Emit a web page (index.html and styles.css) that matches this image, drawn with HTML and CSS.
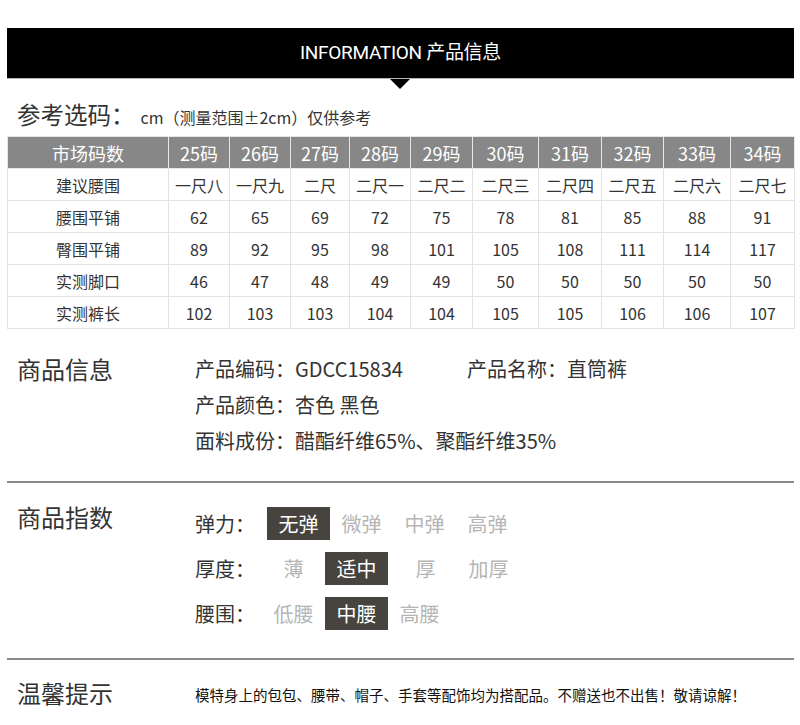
FILE: index.html
```html
<!DOCTYPE html>
<html lang="zh-CN">
<head>
<meta charset="utf-8">
<title>INFORMATION 产品信息</title>
<link rel="stylesheet" href="styles.css">
</head>
<body>
<div class="page">
  <div class="banner"><span class="banner-text">INFORMATION 产品信息</span></div>

  <h2 class="size-title">参考选码：<span class="size-note">cm（测量范围±2cm）仅供参考</span></h2>

  <table class="size-table">
    <colgroup>
      <col style="width:161px"><col style="width:61px"><col style="width:61px"><col style="width:59px"><col style="width:61px"><col style="width:62px"><col style="width:66px"><col style="width:63px"><col style="width:62px"><col style="width:67px"><col style="width:64px">
    </colgroup>
    <thead>
      <tr><th>市场码数</th><th>25码</th><th>26码</th><th>27码</th><th>28码</th><th>29码</th><th>30码</th><th>31码</th><th>32码</th><th>33码</th><th>34码</th></tr>
    </thead>
    <tbody>
      <tr><td>建议腰围</td><td>一尺八</td><td>一尺九</td><td>二尺</td><td>二尺一</td><td>二尺二</td><td>二尺三</td><td>二尺四</td><td>二尺五</td><td>二尺六</td><td>二尺七</td></tr>
      <tr><td>腰围平铺</td><td>62</td><td>65</td><td>69</td><td>72</td><td>75</td><td>78</td><td>81</td><td>85</td><td>88</td><td>91</td></tr>
      <tr><td>臀围平铺</td><td>89</td><td>92</td><td>95</td><td>98</td><td>101</td><td>105</td><td>108</td><td>111</td><td>114</td><td>117</td></tr>
      <tr><td>实测脚口</td><td>46</td><td>47</td><td>48</td><td>49</td><td>49</td><td>50</td><td>50</td><td>50</td><td>50</td><td>50</td></tr>
      <tr><td>实测裤长</td><td>102</td><td>103</td><td>103</td><td>104</td><td>104</td><td>105</td><td>105</td><td>106</td><td>106</td><td>107</td></tr>
    </tbody>
  </table>

  <section class="section info">
    <div class="sec-title">商品信息</div>
    <div class="sec-body">
      <div class="info-line"><span class="info-code">产品编码：GDCC15834</span><span>产品名称：直筒裤</span></div>
      <div class="info-line">产品颜色：杏色 黑色</div>
      <div class="info-line">面料成份：醋酯纤维65%、聚酯纤维35%</div>
    </div>
  </section>

  <hr class="divider">

  <section class="section index">
    <div class="sec-title">商品指数</div>
    <div class="tag-rows">
      <div class="tag-row first">
        <span class="tag-label">弹力：</span>
        <span class="tag active">无弹</span>
        <span class="tag">微弹</span>
        <span class="tag">中弹</span>
        <span class="tag">高弹</span>
      </div>
      <div class="tag-row">
        <span class="tag-label">厚度：</span>
        <span class="tag">薄</span>
        <span class="tag active">适中</span>
        <span class="tag gap">厚</span>
        <span class="tag">加厚</span>
      </div>
      <div class="tag-row">
        <span class="tag-label">腰围：</span>
        <span class="tag">低腰</span>
        <span class="tag active">中腰</span>
        <span class="tag">高腰</span>
      </div>
    </div>
  </section>

  <hr class="divider">

  <section class="section tips">
    <div class="sec-title">温馨提示</div>
    <p class="tips-text">模特身上的包包、腰带、帽子、手套等配饰均为搭配品。不赠送也不出售！敬请谅解！</p>
  </section>
</div>
</body>
</html>
```

FILE: styles.css
```css
* { box-sizing: border-box; }

html, body {
  margin: 0;
  padding: 0;
  background: #fff;
}

body {
  font-family: "Noto Sans CJK SC", "Noto Sans", sans-serif;
  color: #333;
}

.page {
  width: 800px;
  padding: 28px 6px 0 7px;
}

.banner {
  position: relative;
  height: 51px;
  background: #000;
  border-bottom: 1px solid #b8b8b8;
  text-align: center;
}

.banner::after {
  content: "";
  position: absolute;
  left: 383px;
  top: 51px;
  border-left: 10px solid transparent;
  border-right: 10px solid transparent;
  border-top: 10px solid #000;
}

.banner-text {
  display: inline-block;
  line-height: 50px;
  color: #fff;
  font-family: Roboto, "Noto Sans CJK SC", sans-serif;
  font-size: 19px;
  letter-spacing: -0.3px;
}

.size-title {
  height: 30px;
  margin: 20px 0 7px 10px;
  font-size: 23.5px;
  line-height: 30px;
  font-weight: normal;
  color: #333;
  white-space: nowrap;
}

.size-note {
  margin-left: 6px;
  font-size: 16px;
  line-height: 1;
}

.size-table {
  width: 787px;
  table-layout: fixed;
  border-collapse: collapse;
  font-size: 16px;
}

.size-table th,
.size-table td {
  height: 32px;
  padding: 0;
  text-align: center;
  border: 1px solid #e3e3e3;
  white-space: nowrap;
}

.size-table th {
  background: #878787;
  color: #fff;
  font-weight: normal;
  font-size: 18px;
  border-color: #e6e6e6;
}

.size-table td {
  color: #333;
}

.section {
  display: flex;
  padding-left: 10px;
}

.sec-title {
  width: 178px;
  flex: none;
  font-size: 24px;
  line-height: 36px;
  color: #333;
}

.info {
  margin-top: 22px;
}

.sec-body {
  font-size: 20px;
  line-height: 36px;
  color: #333;
}

.info-code {
  display: inline-block;
  width: 272px;
}

.divider {
  margin: 22px 0 0 0;
  border: 0;
  height: 2px;
  background: #8a8a8a;
}

.index {
  margin-top: 16px;
}

.index + .divider {
  margin-top: 28px;
}

.tag-rows {
  display: flex;
  flex-direction: column;
  gap: 12px;
  padding-top: 8px;
}

.tag-row {
  display: flex;
  align-items: center;
  height: 33px;
  font-size: 20px;
}

.tag-label {
  width: 67px;
  color: #333;
}

.tag-row.first .tag-label {
  width: 72px;
}

.tag {
  width: 63px;
  height: 33px;
  line-height: 33px;
  text-align: center;
  color: #b5b5b5;
}

.tag.gap {
  margin-left: 6px;
}

.tag.active {
  background: #47433e;
  color: #fff;
}

.tips {
  margin-top: 15px;
  align-items: center;
}

.tips-text {
  margin: 3px 0 0 0;
  font-size: 14.5px;
  color: #111;
}
```
